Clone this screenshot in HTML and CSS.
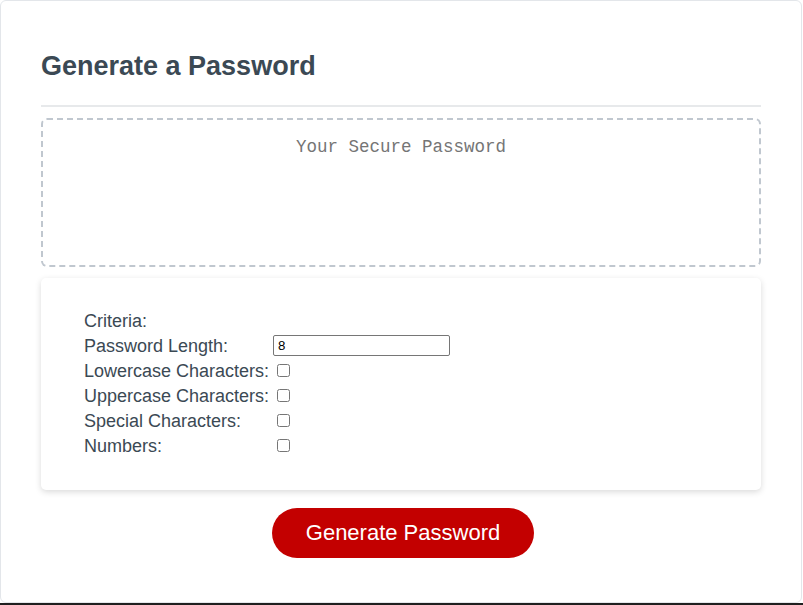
FILE: index.html
```html
<!DOCTYPE html>
<html lang="en">
<head>
<meta charset="UTF-8">
<title>Password Generator</title>
<link rel="stylesheet" href="styles.css">
</head>
<body>
<div class="card">
  <header class="card-header">
    <h2>Generate a Password</h2>
  </header>
  <textarea class="password" readonly placeholder="Your Secure Password"></textarea>
  <div class="criteria">
    <div class="grid">
      <span class="label">Criteria:</span><span></span>
      <label class="label" for="len">Password Length:</label><input id="len" class="len" type="text" value="8">
      <label class="label" for="lower">Lowercase Characters:</label><input id="lower" class="check" type="checkbox">
      <label class="label" for="upper">Uppercase Characters:</label><input id="upper" class="check" type="checkbox">
      <label class="label" for="special">Special Characters:</label><input id="special" class="check" type="checkbox">
      <label class="label" for="num">Numbers:</label><input id="num" class="check" type="checkbox">
    </div>
  </div>
  <div class="footer">
    <button class="btn" type="button">Generate Password</button>
  </div>
</div>
</body>
</html>
```
FILE: styles.css
```css
*, *::before, *::after { box-sizing: border-box; }
html { background: #1f1f1f; }
body {
  margin: 0;
  height: 603px;
  background: #ffffff;
  font-family: "Liberation Sans", Arial, sans-serif;
  color: #3b4954;
}
.card {
  width: 802px;
  height: 603px;
  border: 1px solid #e3e6ea;
  border-radius: 6px;
  padding: 0 40px;
  background: #fff;
}
.card-header { padding-top: 50px; }
.card-header h2 {
  margin: 0;
  font-size: 27px;
  line-height: 31px;
  font-weight: bold;
  color: #3b4954;
}
.card-header::after {
  content: "";
  display: block;
  height: 2px;
  margin-top: 23px;
  background: #e7e9eb;
}
.password {
  display: block;
  width: 100%;
  height: 149px;
  margin: 11px 0 0;
  padding: 16px 2px 2px;
  border: 2px dashed #c0c7cf;
  border-radius: 6px;
  resize: none;
  overflow: hidden;
  text-align: center;
  font-family: "Liberation Mono", "DejaVu Sans Mono", monospace;
  font-size: 17.5px;
  line-height: 22px;
  background: #fff;
}
.password::placeholder { color: #757575; }
.criteria {
  margin-top: 11px;
  background: #fff;
  border-radius: 5px;
  box-shadow: rgba(0, 0, 0, 0.15) 0 2px 6px 0;
  padding: 30px 43px 32px;
  font-size: 18px;
}
.grid {
  display: grid;
  grid-template-columns: 189px 1fr;
  grid-auto-rows: 25px;
  align-items: center;
}
.label { line-height: 21px; padding-top: 2px; white-space: nowrap; }
.len {
  width: 177px;
  height: 21px;
  margin: 0;
  padding: 1px 4px;
  border: 1px solid #767676;
  border-radius: 2px;
  font-family: "Liberation Sans", Arial, sans-serif;
  font-size: 13.33px;
  color: #000;
}
.check {
  width: 13px;
  height: 13px;
  margin: 0 0 0 4px;
}
.footer {
  text-align: center;
  padding-top: 18px;
}
.btn {
  display: inline-block;
  margin: 0 16px 0 20px;
  padding: 14px 34px;
  border: none;
  border-radius: 25px;
  background: #c30000;
  color: #fff;
  font-family: "Liberation Sans", Arial, sans-serif;
  font-size: 22px;
  line-height: 22px;
  cursor: pointer;
}
```
